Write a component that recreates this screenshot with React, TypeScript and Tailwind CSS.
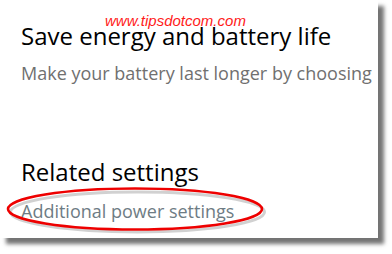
export default function App() {
  return (
    <div className="w-[392px] h-[254px] bg-white overflow-hidden" style={{ fontFamily: '"Open Sans", "Noto Sans", sans-serif' }}>
      <div className="relative w-[378px] h-[238px] bg-white shadow-[6px_6px_4px_rgba(0,0,0,0.55)] pl-[21px] pt-[21px]">
        <span
          className="absolute left-[105px] top-[13px] text-[15px] italic text-[#ff1a1a] leading-none"
          style={{ fontFamily: '"Liberation Sans", Arial, sans-serif' }}
        >
          www.tipsdotcom.com
        </span>
        <h1 className="text-[24px] leading-[30px] text-black whitespace-nowrap">Save energy and battery life</h1>
        <p className="mt-[10px] text-[18px] leading-[24px] text-[#707070] whitespace-nowrap">
          Make your battery last longer by choosing
        </p>
        <h2 className="mt-[72px] text-[24px] leading-[30px] text-black whitespace-nowrap">Related settings</h2>
        <p className="mt-[12px] text-[18px] leading-[24px] text-[#6e7c84] whitespace-nowrap">Additional power settings</p>
        <svg className="absolute left-0 top-0 pointer-events-none" width="392" height="254" viewBox="0 0 392 254">
          <ellipse cx="136" cy="210" rx="127" ry="20" fill="none" stroke="rgba(0,0,0,0.18)" strokeWidth="3" transform="translate(1.5 2)" />
          <ellipse cx="135" cy="209" rx="127" ry="20.5" fill="none" stroke="#ee0000" strokeWidth="2.6" />
        </svg>
      </div>
    </div>
  );
}
